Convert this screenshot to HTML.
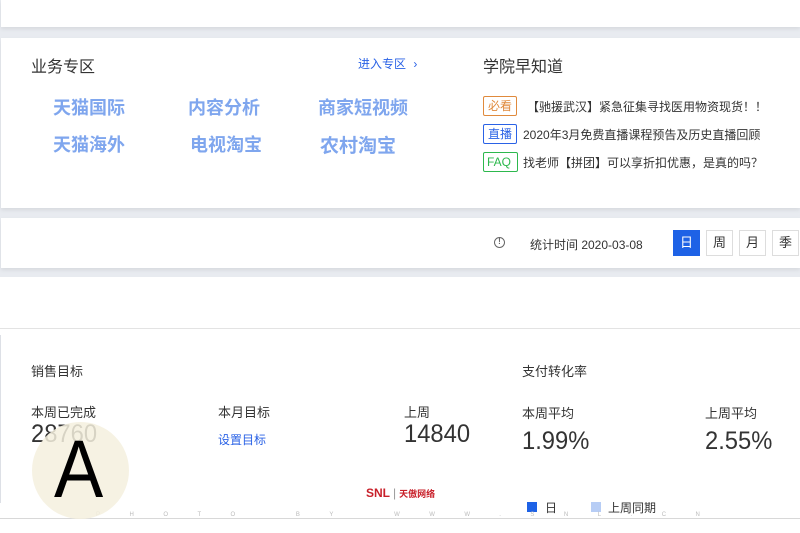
<!DOCTYPE html>
<html><head><meta charset="utf-8"><style>
*{margin:0;padding:0;box-sizing:border-box}
body{width:800px;height:533px;overflow:hidden;background:#e8ebf0;font-family:"Liberation Sans","Noto Sans CJK SC",sans-serif;position:relative;color:#333}
.abs{position:absolute}
.card{position:absolute;background:#fff;left:1px;right:0;box-shadow:0 2px 4px rgba(0,0,0,0.08)}
.t{position:absolute;white-space:nowrap}
.blue{color:#7fa6ee;font-weight:bold;font-size:18px}
.tag{position:absolute;left:483px;height:20px;border:1px solid;font-size:12px;line-height:18px;padding:0 4px;border-radius:2px}
.item{position:absolute;font-size:12px;color:#333;white-space:nowrap}
.btn{position:absolute;top:230px;width:27px;height:26px;border:1px solid #ddd;font-size:13px;text-align:center;line-height:24px;background:#fff;color:#333}
.lbl{font-size:13px;color:#333}
.num{font-size:25px;color:#333;transform:scaleX(0.95);transform-origin:left top}
</style></head><body>
<div class="card" style="top:0;height:27px"></div>
<div class="card" style="top:38px;height:170px"></div>
<div class="t" style="left:31px;top:53px;font-size:16px;color:#333">业务专区</div>
<div class="t" style="left:358px;top:55px;font-size:12px;color:#2a62e6">进入专区 <span style="margin-left:4px;color:#2a62e6">&#x203A;</span></div>
<div class="t blue" style="left:53px;top:94px">天猫国际</div>
<div class="t blue" style="left:188px;top:94px">内容分析</div>
<div class="t blue" style="left:318px;top:94px">商家短视频</div>
<div class="t blue" style="left:53px;top:131px">天猫海外</div>
<div class="t blue" style="left:190px;top:131px">电视淘宝</div>
<div class="t blue" style="left:320px;top:131px;font-size:19px">农村淘宝</div>
<div class="t" style="left:483px;top:53px;font-size:16px;color:#333">学院早知道</div>
<div class="tag" style="top:96px;color:#e08a3c;border-color:#e08a3c">必看</div>
<div class="item" style="left:527px;top:98px">【驰援武汉】紧急征集寻找医用物资现货！！</div>
<div class="tag" style="top:124px;color:#2a62e6;border-color:#2a62e6">直播</div>
<div class="item" style="left:523px;top:126px">2020年3月免费直播课程预告及历史直播回顾</div>
<div class="tag" style="top:152px;color:#2db84d;border-color:#2db84d;width:35px;padding:0 3px">FAQ</div>
<div class="item" style="left:523px;top:154px">找老师【拼团】可以享折扣优惠，是真的吗？</div>

<div class="card" style="top:218px;height:50px"></div>
<div class="t" style="left:494px;top:237px;width:11px;height:11px;border:1.5px solid #666;border-radius:50%;font-size:8px;line-height:8px;text-align:center;color:#666;font-weight:bold">!</div>
<div class="t" style="left:530px;top:236px;font-size:12px;color:#333">统计时间 2020-03-08</div>
<div class="btn" style="left:673px;background:#1e62e6;border-color:#1e62e6;color:#fff">日</div>
<div class="btn" style="left:706px">周</div>
<div class="btn" style="left:739px">月</div>
<div class="btn" style="left:772px">季</div>

<div class="card" style="top:277px;left:0;height:256px;box-shadow:none"></div>
<div class="abs" style="left:0;right:0;top:328px;height:1px;background:#e3e3e3"></div>
<div class="abs" style="left:0;top:335px;width:1px;height:168px;background:#dde0e6"></div>
<div class="t" style="left:31px;top:361px;font-size:13px">销售目标</div>
<div class="t" style="left:522px;top:361px;font-size:13px">支付转化率</div>
<div class="t lbl" style="left:31px;top:402px">本周已完成</div>
<div class="t lbl" style="left:218px;top:402px">本月目标</div>
<div class="t lbl" style="left:404px;top:402px">上周</div>
<div class="t lbl" style="left:522px;top:403px">本周平均</div>
<div class="t lbl" style="left:705px;top:403px">上周平均</div>
<div class="t num" style="left:31px;top:420px">28760</div>
<div class="t" style="left:218px;top:431px;font-size:12px;color:#2a62e6">设置目标</div>
<div class="t num" style="left:404px;top:420px">14840</div>
<div class="t num" style="left:522px;top:427px">1.99%</div>
<div class="t num" style="left:705px;top:427px">2.55%</div>
<div class="abs" style="left:0;right:0;top:518px;height:1px;background:#d8d8d8"></div>
<div class="abs" style="left:0;top:503px;right:0;height:15px;background:#fff"></div>
<div class="t" style="left:366px;top:486px;font-size:12px;font-weight:bold;color:#c8202a">SNL<span style="font-weight:normal;color:#999;margin:0 3px">|</span><span style="font-size:9px">天傲网络</span></div>
<div class="abs" style="left:527px;top:502px;width:10px;height:10px;background:#1e62e6"></div>
<div class="t" style="left:545px;top:499px;font-size:12px">日</div>
<div class="abs" style="left:591px;top:502px;width:10px;height:10px;background:#b7cdf5"></div>
<div class="t" style="left:608px;top:499px;font-size:12px">上周同期</div>
<div class="t" style="left:96px;top:512px;font-size:6px;color:#bbb;letter-spacing:29.5px">PHOTO&nbsp;BY&nbsp;WWW.SNL.CN</div>
<div class="abs" style="left:32px;top:422px;width:97px;height:97px;border-radius:50%;background:rgba(245,240,222,0.85)"></div>
<div class="t" style="left:54px;top:430px;font-size:82px;line-height:80px;color:#000;font-family:'Liberation Sans',sans-serif;transform:scaleX(0.9);transform-origin:left top">A</div>
</body></html>
